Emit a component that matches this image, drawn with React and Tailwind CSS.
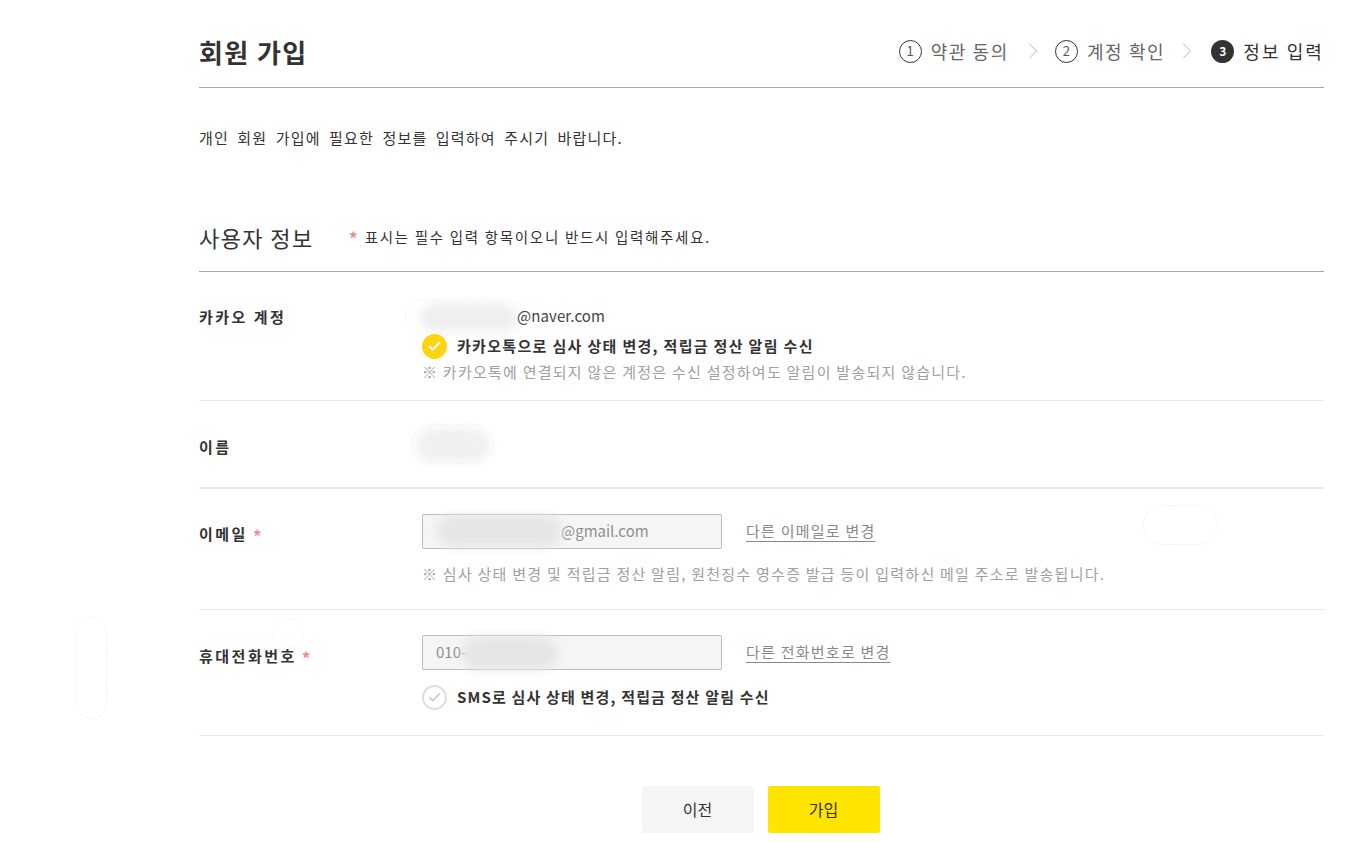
import React from "react";
import { Check, ChevronRight } from "lucide-react";

const font = "font-['Noto_Sans_CJK_KR','Noto_Sans',sans-serif]";

function Step({ num, label, active }) {
  return (
    <div className="flex items-center gap-[9px]">
      {active ? (
        <span className="flex h-[23px] w-[23px] items-center justify-center rounded-full bg-[#333333] text-[12px] font-bold text-white">
          {num}
        </span>
      ) : (
        <span className="flex h-[23px] w-[23px] items-center justify-center rounded-full border border-[#333333] text-[13px] text-[#555555]">
          {num}
        </span>
      )}
      <span className={`text-[18px] ${active ? "tracking-[2.1px] text-[#333333]" : "tracking-[1.6px] text-[#666666]"}`}>{label}</span>
    </div>
  );
}

function Smudge({ className }) {
  return <div className={`absolute rounded-full blur-[5px] ${className}`} />;
}

function Ghost({ className }) {
  return <div className={`absolute rounded-full border border-dashed border-[#f2f2f2] ${className}`} />;
}

function Star() {
  return <span className="ml-[5px] inline-block align-[-3px] text-[17px] font-bold leading-none text-[#f58a8a]">*</span>;
}

function Row({ label, required, className, children }) {
  return (
    <div className={`flex border-b border-[#e9e9e9] ${className}`}>
      <div className="w-[223px] shrink-0 text-[15px] font-bold leading-[20px] tracking-[2.5px] text-[#333333]">
        {label}
        {required && <Star />}
      </div>
      <div className="relative min-w-0 flex-1 text-[15px] tracking-[1.25px]">{children}</div>
    </div>
  );
}

function ReadonlyInput({ value }) {
  return (
    <div className="flex h-[35px] w-[300px] items-center rounded-[2px] border border-[#bdbdbd] bg-[#f5f5f5] pl-[13px] text-[15px] tracking-normal text-[#8f8f8f]">
      {value}
    </div>
  );
}

export default function App() {
  return (
    <div className={`relative h-[842px] overflow-hidden bg-white pl-[199px] pr-[47px] ${font}`}>
      <Ghost className="left-[76px] top-[617px] h-[102px] w-[31px]" />

      <header className="flex h-[88px] items-center justify-between border-b border-[#a9a9a9] pt-[15px]">
        <h1 className="text-[26px] font-bold tracking-[1.4px] text-[#333333]">회원 가입</h1>
        <div className="flex items-center">
          <Step num="1" label="약관 동의" />
          <ChevronRight className="ml-[10px] mr-[8px] h-[28px] w-[28px] text-[#d4d4d4]" strokeWidth={1} />
          <Step num="2" label="계정 확인" />
          <ChevronRight className="ml-[8px] mr-[10px] h-[28px] w-[28px] text-[#d4d4d4]" strokeWidth={1} />
          <Step num="3" label="정보 입력" active />
        </div>
      </header>

      <p className="mt-[38px] text-[15px] leading-[24px] tracking-[1.2px] text-[#333333] [word-spacing:3.8px]">
        개인 회원 가입에 필요한 정보를 입력하여 주시기 바랍니다.
      </p>

      <div className="mt-[61px] flex h-[61px] items-center border-b border-[#a9a9a9] pb-[8px]">
        <h2 className="w-[150px] text-[22px] tracking-[1.4px] text-[#333333]">사용자 정보</h2>
        <span className="mr-[7px] inline-block align-[-3px] text-[17px] font-bold leading-none text-[#f58a8a]">*</span>
        <span className="text-[14.5px] tracking-[1.7px] text-[#333333]">표시는 필수 입력 항목이오니 반드시 입력해주세요.</span>
      </div>

      <Row label="카카오 계정" className="h-[129px] pt-[35px]">
        <Ghost className="-left-[17px] -top-[7px] h-[35px] w-[120px]" />
        <Smudge className="-left-[2px] -top-[3px] h-[27px] w-[97px] bg-[#efefef]" />
        <div className="relative -mt-[2px] pl-[95px] leading-[22px] tracking-[0.1px] text-[#444444]">@naver.com</div>
        <div className="relative mt-[7px] flex h-[25px] items-center gap-[10px]">
          <span className="flex h-[25px] w-[25px] items-center justify-center rounded-full bg-[#fcd411]">
            <Check className="h-[15px] w-[15px] text-white" strokeWidth={3} />
          </span>
          <span className="font-bold tracking-[1.32px] text-[#333333]">카카오톡으로 심사 상태 변경, 적립금 정산 알림 수신</span>
        </div>
        <p className="mt-[3px] leading-[20px] text-[#a0a0a0]">
          ※ 카카오톡에 연결되지 않은 계정은 수신 설정하여도 알림이 발송되지 않습니다.
        </p>
      </Row>

      <Row label="이름" className="h-[88px] items-center border-b-2 pt-[6px]">
        <Ghost className="-left-[11px] -top-[23px] h-[40px] w-[83px]" />
        <Smudge className="-left-[6px] -top-[19px] h-[34px] w-[74px] bg-[#f0f0f0]" />
      </Row>

      <Row label="이메일" required className="h-[121px] pt-[35px]">
        <div className="-mt-[10px] flex items-center gap-[24px]">
          <ReadonlyInput value={<span className="pl-[125px]">@gmail.com</span>} />
          <a className="text-[#888888] underline underline-offset-4">다른 이메일로 변경</a>
        </div>
        <Smudge className="left-[15px] -top-[9px] h-[32px] w-[125px] bg-[#e6e6e6]" />
        <Ghost className="left-[721px] -top-[19px] h-[40px] w-[75px]" />
        <p className="mt-[15px] leading-[20px] text-[#a0a0a0]">
          ※ 심사 상태 변경 및 적립금 정산 알림, 원천징수 영수증 발급 등이 입력하신 메일 주소로 발송됩니다.
        </p>
      </Row>

      <Row label="휴대전화번호" required className="h-[126px] pt-[36px]">
        <Ghost className="-left-[149px] -top-[28px] h-[30px] w-[30px]" />
        <div className="-mt-[11px] flex items-center gap-[24px]">
          <ReadonlyInput value="010-" />
          <a className="text-[#888888] underline underline-offset-4">다른 전화번호로 변경</a>
        </div>
        <Smudge className="left-[40px] -top-[10px] h-[34px] w-[96px] bg-[#e6e6e6]" />
        <div className="mt-[15px] flex h-[25px] items-center gap-[10px]">
          <span className="flex h-[25px] w-[25px] items-center justify-center rounded-full border-2 border-[#dddddd] bg-white">
            <Check className="h-[15px] w-[15px] text-[#c9c9c9]" strokeWidth={2.5} />
          </span>
          <span className="font-bold tracking-[1.17px] text-[#333333]">SMS로 심사 상태 변경, 적립금 정산 알림 수신</span>
        </div>
      </Row>

      <div className="mt-[50px] flex justify-center gap-[14px] pr-[2px]">
        <button className="h-[47px] w-[112px] rounded-[2px] bg-[#f5f5f5] pb-[2px] text-[16px] text-[#333333]">이전</button>
        <button className="h-[47px] w-[112px] rounded-[2px] bg-[#ffe400] pb-[2px] text-[16px] text-[#333333]">가입</button>
      </div>
    </div>
  );
}
